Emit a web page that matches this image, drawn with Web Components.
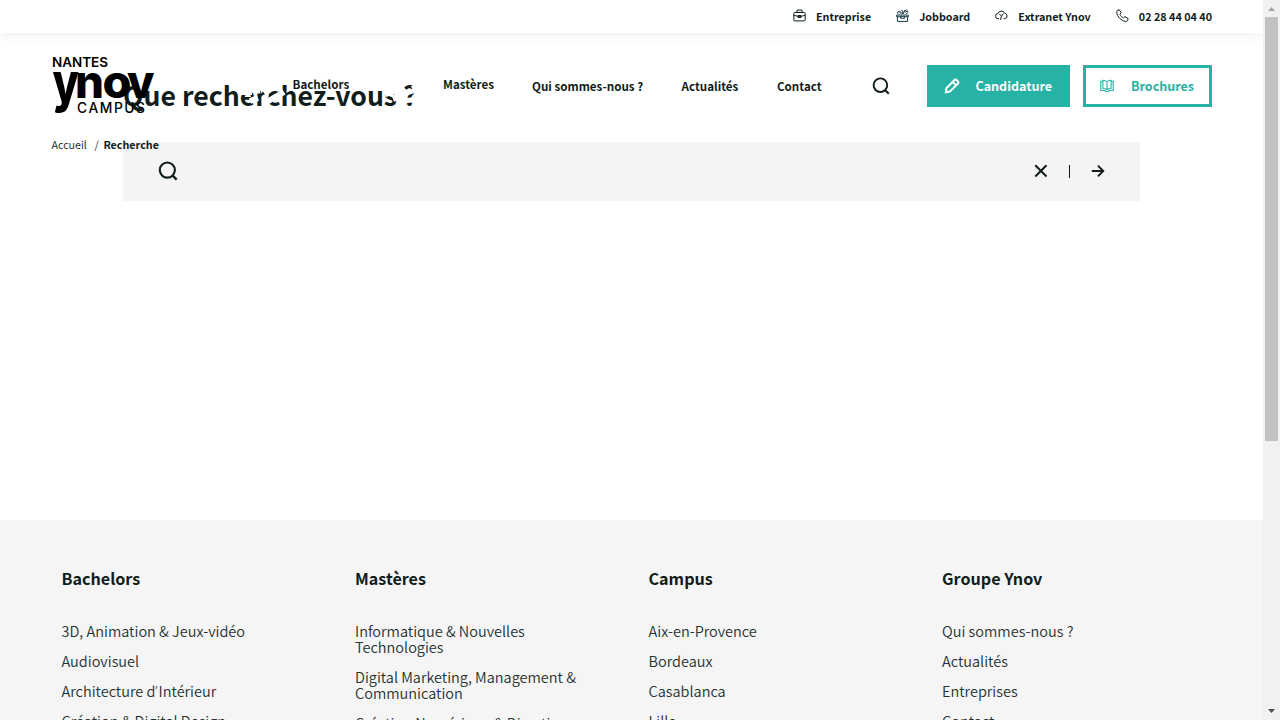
<!DOCTYPE html>
<html lang="fr">
<head>
<meta charset="utf-8">
<title>Recherche - Ynov Campus Nantes</title>
<style>
html,body{margin:0;height:720px;overflow:hidden;background:#fff}
body{font-family:"Noto Sans CJK SC","Noto Sans",sans-serif;color:#101d1c;--accent:#26b2a5}
</style>
</head>
<body>
<ynov-page></ynov-page>
<script>
const define = (name, html) => customElements.define(name, class extends HTMLElement {
  connectedCallback() {
    if (this.shadowRoot) return;
    const t = document.createElement('template');
    t.innerHTML = typeof html === 'function' ? html(this) : html;
    this.attachShadow({mode: 'open'}).append(t.content.cloneNode(true));
  }
});

const icons = {
  briefcase: ['0 0 13 13', '<rect x=".8" y="3.5" width="11.4" height="8.4" rx="1"/><path d="M4 3.3V1.1h5v2.2M1 6.3l3.8 1h3.4l3.8-1M5 6.5h3v2H5z"/>'],
  jobs: ['0 0 13 13', '<path d="M.6 6.100h11.8v1.6H.6zM1.4 7.7v4.700h10.2V7.700M4.5 7.7v1.5h4V7.7M2.2 5.4L1.5 3.2l1.7-.9 2.3 3M5.2 1l1.8 1.3L6.2 5M8.8 1.2L7 5.2M9.2 3.2l2.2-1.4.5 1.6-2 2M3.4 1.8l2 2M8 2.5L10.6.8" stroke="#143a49"/>'],
  cloud: ['0 0 13 13', '<path d="M4.2 9.7H3.3A2.6 2.6 0 0 1 3 4.5 3.6 3.6 0 0 1 9.7 4.2a2.8 2.8 0 0 1 .2 5.5H8.6M4.5 5l2 2 2-2.4M6.500 7l-1 4"/>'],
  phone: ['0 0 13 13', '<path d="M1.2 1.5L3.2.7l2 3-1.3 1.6c.6 1.6 1.9 2.9 3.5 3.6l1.5-1.3 3.2 1.9-.5 2.2c-.4.7-1.3.9-2.3.7C5 11.500 1.500 8 .8 3.800.7 2.900.8 2 1.200 1.500z"/>'],
  search: ['0 0 18 18', '<circle cx="8.400" cy="8.200" r="6.800" stroke-width="1.900"/><path d="M13 13l3.800 3.800" stroke-width="2.100"/>'],
  pencil: ['0 0 16 16', '<path d="M1.8 14.200l.6-4L10.300 2.200a1.700 1.700 0 0 1 2.400 0l1.100 1.100a1.700 1.700 0 0 1 0 2.400L5.800 13.600zM8.700 4l3.300 3.300" stroke-width="2"/>'],
  book: ['0 0 14 14', '<path stroke-width="1.100" d="M7 2.600C5.800 1.500 4.500 1.200 2.900 1.200v8.300c1.600 0 3 .4 4.100 1.300 1.100-.9 2.500-1.300 4.100-1.300V1.200C9.500 1.200 8.200 1.500 7 2.600zM7 2.600v8M2.700 2.300H.8v9.200h4l1 1.200h2.400l1-1.200h4V2.300h-1.900"/>'],
  close: ['0 0 14 14', '<path d="M1.300 1.300l11.200 11.200M12.500 1.300L1.300 12.500" stroke-width="2"/>'],
  arrow: ['0 0 14 14', '<path d="M.8 7H12M6.900 1.600L12.300 7l-5.400 5.400" stroke-width="1.900"/>']
};
define('y-icon', el => {
  const [box, body] = icons[el.getAttribute('name')], s = el.getAttribute('size');
  return `<style>:host{display:block;flex:none;width:${s}px;height:${s}px}svg{display:block}</style>
  <svg width="${s}" height="${s}" viewBox="${box}" fill="none" stroke="currentColor" stroke-width="1">${body}</svg>`;
});

define('top-link', el => `<style>:host{display:flex;align-items:center;gap:10px;font:700 10.76px/16px "Noto Sans CJK SC",sans-serif}y-icon{margin-top:-2px}</style>
<y-icon name="${el.getAttribute('icon')}" size="13"></y-icon><span><slot></slot></span>`);

define('top-bar', `<style>:host{display:flex;box-sizing:border-box;height:33px;padding:0 51px 0 0;justify-content:flex-end;align-items:center;gap:25px;background:#fff;box-shadow:0 0 14px rgba(0,0,0,.09)}</style>
<top-link icon="briefcase">Entreprise</top-link><top-link icon="jobs">Jobboard</top-link><top-link icon="cloud">Extranet Ynov</top-link><top-link icon="phone">02 28 44 04 40</top-link>`);

define('ynov-logo', `<style>:host{display:block;width:104px;height:62px}svg{display:block;fill:#000}</style>
<svg width="104" height="62" viewBox="0 0 104 62" font-family="Inter,sans-serif">
<text x="0" y="11.500" font-size="12.800" font-weight="600" textLength="56" lengthAdjust="spacingAndGlyphs">NANTES</text>
<text transform="translate(0.500 47) scale(1 1.240)" x="0" y="0" font-size="44" font-weight="800" textLength="26.500" lengthAdjust="spacingAndGlyphs">y</text>
<g font-size="46" font-weight="800"><text x="23" y="42.500" textLength="29" lengthAdjust="spacingAndGlyphs">n</text><text x="50.500" y="42.500" textLength="29" lengthAdjust="spacingAndGlyphs">o</text><text x="75" y="42.500" textLength="27.500" lengthAdjust="spacingAndGlyphs">v</text></g>
<text x="25" y="58" font-size="13.800" font-weight="500" textLength="68">CAMPUS</text>
</svg>`);

define('cta-button', el => {
  const solid = el.hasAttribute('solid');
  return `<style>:host{display:flex;box-sizing:border-box;height:42px;align-items:center;border:3px solid var(--accent);
  background:${solid ? 'var(--accent)' : '#fff'};color:${solid ? '#fff' : 'var(--accent)'};padding-left:14px;gap:${solid ? 15.5 : 17}px;font:700 12.5px/20px "Noto Sans CJK SC",sans-serif}</style>
  <y-icon name="${el.getAttribute('icon')}" size="${solid ? 16 : 14}"></y-icon><slot></slot>`;
});

define('main-nav', `<style>:host{display:grid;grid-template-columns:241px 150.500px 89px 149.500px 95.500px 95px 55px 143px 129px;grid-template-rows:42px;align-items:center;height:42px;padding:32px 0 0 51.500px;font:700 11.600px/18px "Noto Sans CJK SC",sans-serif}
.up{margin-top:-4px}ynov-logo{margin:-10px 0}cta-button:last-child{margin-left:13px;width:129px}</style>
<ynov-logo></ynov-logo><span class="up">Bachelors</span><span class="up">Mastères</span><span>Qui sommes-nous ?</span><span>Actualités</span><span>Contact</span>
<y-icon name="search" size="18"></y-icon><cta-button solid icon="pencil">Candidature</cta-button><cta-button icon="book">Brochures</cta-button>`);

define('bread-crumb', `<style>:host{display:flex;padding:30px 0 0 51.500px;font:350 10.760px/16px "Noto Sans CJK SC",sans-serif}i{font-style:normal;width:9px;margin-left:7.500px}b{font-weight:700}</style>
<span>Accueil</span><i>/</i><b>Recherche</b>`);

define('site-header', `<style>:host{display:block;position:relative}</style>
<top-bar></top-bar><main-nav></main-nav><bread-crumb></bread-crumb>`);

define('search-panel', `<style>:host{display:block;padding:75px 123px 0}
.title{position:relative;width:300px}
h1{margin:0;font:700 26.620px/40px "Noto Sans CJK SC",sans-serif;white-space:nowrap}
.chev{position:absolute;left:0;top:0}
form{display:flex;align-items:center;box-sizing:border-box;height:59px;margin:27px 0 0;padding:0 35px 1px 35px;background:#f4f4f4}
span{flex:1}hr{width:1px;height:13px;margin:0 21px 0 21px;border:0;background:#101d1c}</style>
<div class="title"><h1>Que recherchez-vous ?</h1>
<svg class="chev" width="300" height="40" fill="none" stroke="#fff"><path d="M118 17h11M127 26l8-3M141 18l5-3M142 28l19-11" stroke-width="6"/><path d="M133 17l4 0M144 19l0 9" stroke-width="3"/><path d="M262 19l14-4M270 24l8-3" stroke-width="6"/><path d="M281 19l15-5M290 10l5 8M281 26l14-2" stroke-width="5"/></svg></div>
<form><y-icon name="search" size="20"></y-icon><span></span><y-icon name="close" size="14"></y-icon><hr><y-icon name="arrow" size="14"></y-icon></form>`);

define('link-column', el => `<style>:host{display:block}h2{margin:0 0 33px;font:700 16.140px/24px "Noto Sans CJK SC",sans-serif}
ul{list-style:none;margin:0;padding:0;display:grid;gap:14px;font:350 14.500px/16px "Noto Sans CJK SC",sans-serif;white-space:nowrap;color:#263231}
q{quotes:none;font-family:"Noto Sans",sans-serif;line-height:1px;letter-spacing:1px}</style>
<h2>${el.getAttribute('heading')}</h2><ul>${el.getAttribute('links').split('|').map(x => `<li>${x.replace(/&/g, '&amp;').replace('/', '<br>').replace('’', '<q>’</q>')}</li>`).join('')}</ul>`);

define('site-footer', `<style>:host{display:grid;grid-template-columns:repeat(4,293.500px);box-sizing:border-box;height:200px;overflow:hidden;padding:46px 0 0 61.500px;background:#f5f5f5}</style>
<link-column heading="Bachelors" links="3D, Animation &amp; Jeux-vidéo|Audiovisuel|Architecture d’Intérieur|Création &amp; Digital Design"></link-column>
<link-column heading="Mastères" links="Informatique &amp; Nouvelles/Technologies|Digital Marketing, Management &amp;/Communication|Création Numérique &amp; Direction"></link-column>
<link-column heading="Campus" links="Aix-en-Provence|Bordeaux|Casablanca|Lille"></link-column>
<link-column heading="Groupe Ynov" links="Qui sommes-nous ?|Actualités|Entreprises|Contact"></link-column>`);

define('scroll-bar', `<style>:host{display:flex;flex-direction:column;height:720px;background:#f1f1f1}svg{display:block;flex:none}div{height:424px;margin:0 2px auto;background:#c1c1c1}</style>
<svg width="17" height="17"><path d="M5 11h7L8.500 7z" fill="#a3a3a3"/></svg><div></div><svg width="17" height="17"><path d="M5 6h7l-3.500 4z" fill="#505050"/></svg>`);

define('ynov-page', `<style>:host{display:grid;grid-template-columns:1263px 17px;height:720px;overflow:hidden}
main{display:grid;grid-template-rows:520px 200px;overflow:hidden}search-panel,site-header{grid-area:1/1}</style>
<main><search-panel></search-panel><site-header></site-header><site-footer></site-footer></main><scroll-bar></scroll-bar>`);
</script>
</body>
</html>
